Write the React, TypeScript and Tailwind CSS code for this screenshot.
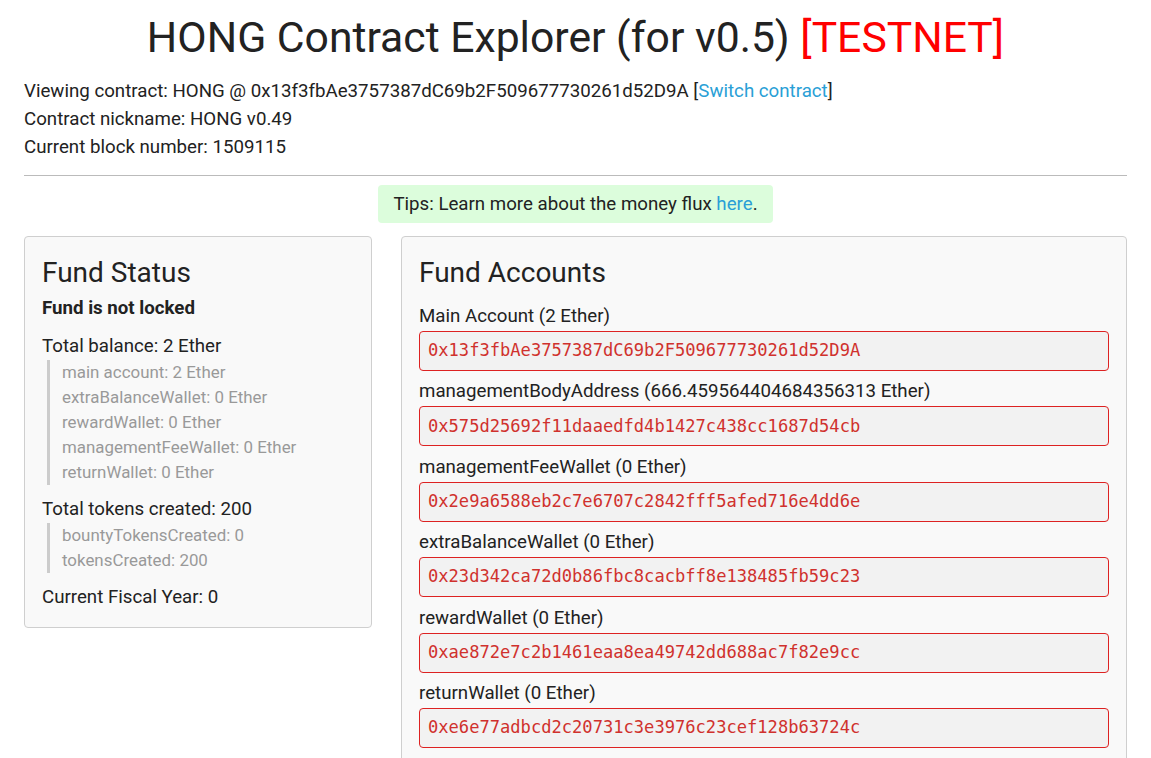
import React from "react";

const accounts = [
  ["Main Account (2 Ether)", "0x13f3fbAe3757387dC69b2F509677730261d52D9A"],
  ["managementBodyAddress (666.459564404684356313 Ether)", "0x575d25692f11daaedfd4b1427c438cc1687d54cb"],
  ["managementFeeWallet (0 Ether)", "0x2e9a6588eb2c7e6707c2842fff5afed716e4dd6e"],
  ["extraBalanceWallet (0 Ether)", "0x23d342ca72d0b86fbc8cacbff8e138485fb59c23"],
  ["rewardWallet (0 Ether)", "0xae872e7c2b1461eaa8ea49742dd688ac7f82e9cc"],
  ["returnWallet (0 Ether)", "0xe6e77adbcd2c20731c3e3976c23cef128b63724c"],
];

export default function App() {
  return (
    <div className="w-[1151px] h-[758px] overflow-hidden bg-white text-[#222] font-['Roboto',sans-serif]">
      <div className="px-6">
        <h1 className="text-center text-[42.7px] leading-[50px] pt-[12px] font-normal">
          HONG Contract Explorer (for v0.5) <span className="text-[#ff0000]">[TESTNET]</span>
        </h1>
        <div className="mt-[15px] text-[18.7px] leading-[28px]">
          <div>
            Viewing contract: HONG @ 0x13f3fbAe3757387dC69b2F509677730261d52D9A [<span className="text-[#2a9fd6]">Switch contract</span>]
          </div>
          <div>Contract nickname: HONG v0.49</div>
          <div>Current block number: 1509115</div>
        </div>
        <hr className="mt-[14px] border-t border-[#bbbbbb]" />
        <div className="flex justify-center mt-[9px]">
          <div className="bg-[#dcfddc] rounded-[4px] px-[15px] h-[38px] flex items-center text-[18.7px]">
            Tips: Learn more about the money flux&nbsp;<span className="text-[#2a9fd6]">here</span>.
          </div>
        </div>
        <div className="flex items-start gap-[29px] mt-[13px]">
          <div className="w-[348px] bg-[#f9f9f9] border border-[#cfcfcf] rounded-[4px] px-[17px] pt-[18px] pb-[17px]">
            <h2 className="text-[28px] leading-[36px]">Fund Status</h2>
            <div className="font-bold text-[18.7px] leading-[26px] mt-[4px]">Fund is not locked</div>
            <div className="text-[18.7px] leading-[26px] mt-[12px]">Total balance: 2 Ether</div>
            <div className="ml-[5px] border-l-[3px] border-[#cccccc] pl-[12px] text-[#999999] text-[16.9px] leading-[25px] mt-[1px]">
              <div>main account: 2 Ether</div>
              <div>extraBalanceWallet: 0 Ether</div>
              <div>rewardWallet: 0 Ether</div>
              <div>managementFeeWallet: 0 Ether</div>
              <div>returnWallet: 0 Ether</div>
            </div>
            <div className="text-[18.7px] leading-[26px] mt-[11px]">Total tokens created: 200</div>
            <div className="ml-[5px] border-l-[3px] border-[#cccccc] pl-[12px] text-[#999999] text-[16.9px] leading-[25px] mt-[1px]">
              <div>bountyTokensCreated: 0</div>
              <div>tokensCreated: 200</div>
            </div>
            <div className="text-[18.7px] leading-[26px] mt-[11px]">Current Fiscal Year: 0</div>
          </div>
          <div className="flex-1 bg-[#f9f9f9] border border-[#cfcfcf] rounded-[4px] px-[17px] pt-[18px] pb-[16px]">
            <h2 className="text-[28px] leading-[36px]">Fund Accounts</h2>
            <div className="mt-[12px]">
              {accounts.map(([label, addr]) => (
                <div key={addr} className="mb-[7.4px]">
                  <div className="text-[18.7px] leading-[26px]">{label}</div>
                  <div className="mt-[2px] h-[40px] flex items-center bg-[#f2f2f2] border border-[#dd2222] rounded-[4px] px-[8px] text-[#d0312d] text-[17.1px] font-['DejaVu_Sans_Mono',monospace]">
                    {addr}
                  </div>
                </div>
              ))}
            </div>
          </div>
        </div>
      </div>
    </div>
  );
}
